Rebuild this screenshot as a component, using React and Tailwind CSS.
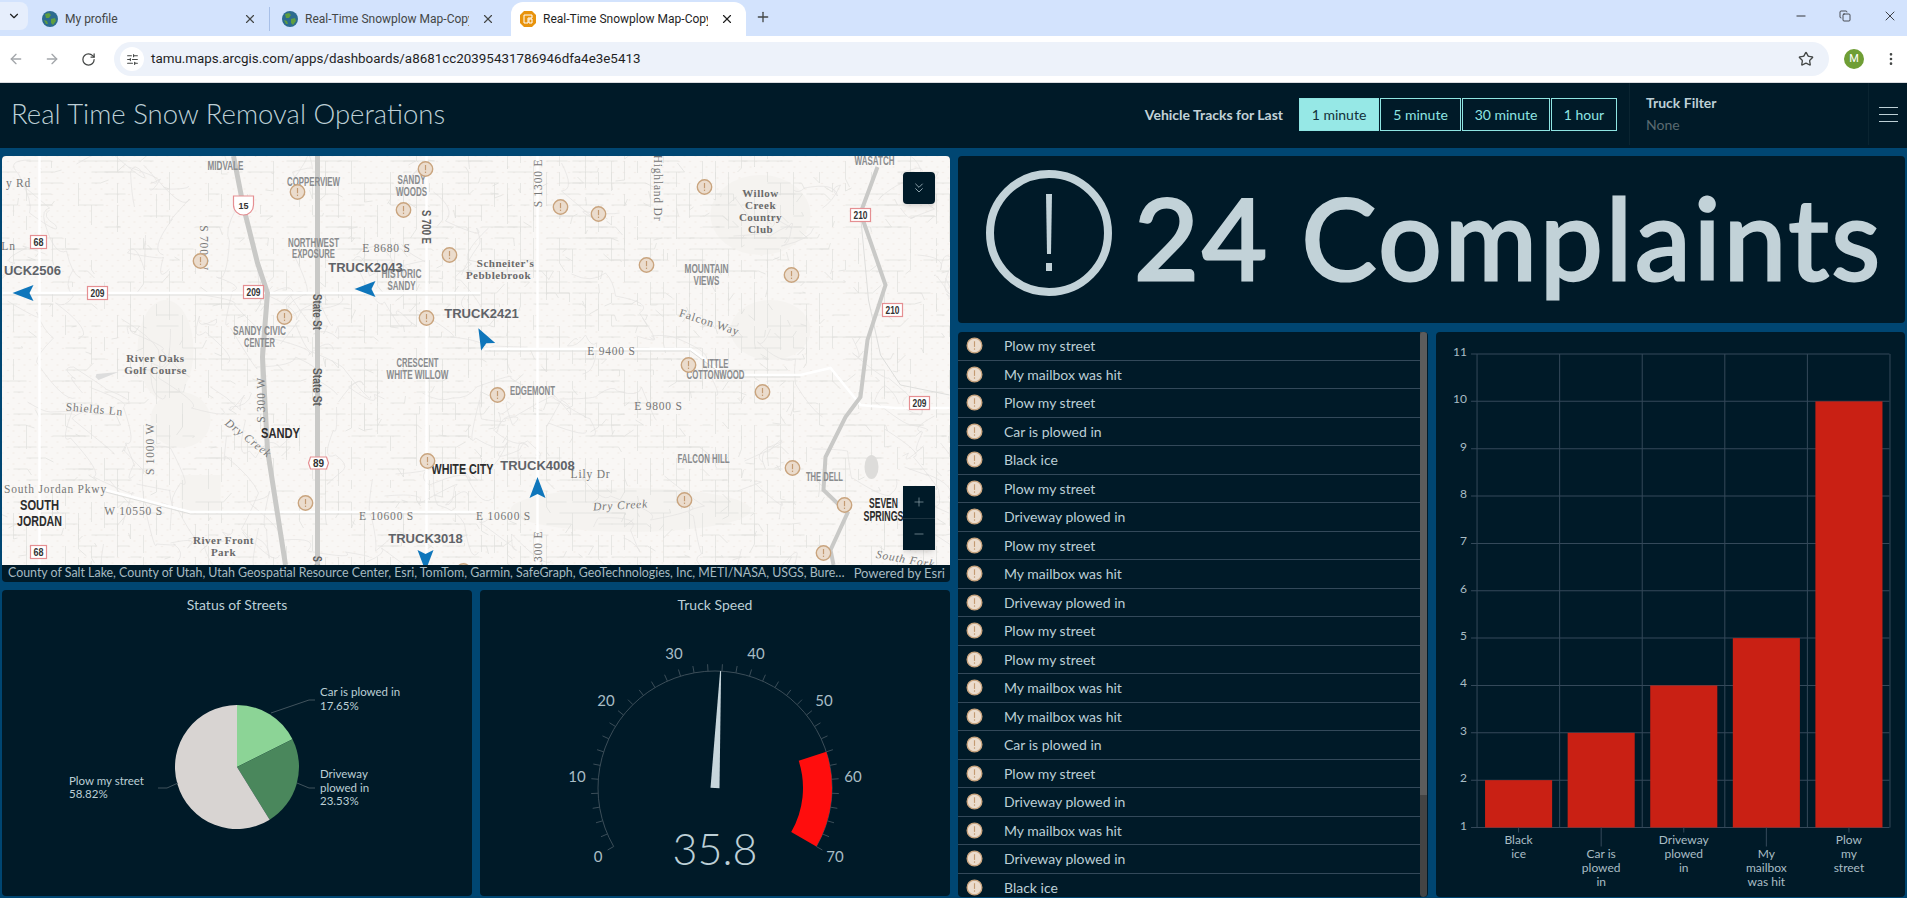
import { ChevronDown, X, Plus, ArrowLeft, ArrowRight, RotateCw, SlidersHorizontal, Star, EllipsisVertical, Minus, Copy, ChevronsDown } from 'lucide-react';

const UI_FONT = "font-['Lato','Noto_Sans',sans-serif]";

// seeded random so the street pattern stays the same between renders
const makeRandom = (seed) => () => {
  seed = (seed * 16807) % 2147483647;
  return (seed - 1) / 2147483646;
};

const buildStreets = () => {
  const rand = makeRandom(4217);
  let d = '';
  for (let x = 0; x < 950; x += 13) {
    for (let y = 150; y < 570; y += 11) {
      const r = rand();
      const dense = x > 340 && x < 800 ? 0.7 : 0.42;
      if (r > dense) continue;
      const len = 8 + rand() * 20;
      if (rand() > 0.5) d += `M${x} ${y}h${len.toFixed(0)}`;
      else d += `M${x} ${y}v${len.toFixed(0)}`;
      if (rand() > 0.6) d += `l${(rand() * 18 - 9).toFixed(0)} ${(rand() * 18 - 9).toFixed(0)}`;
    }
  }
  return d;
};

const buildContours = () => {
  const rand = makeRandom(991);
  let d = '';
  for (let i = 0; i < 90; i++) {
    let x = rand() * 950;
    let y = 156 + rand() * 410;
    d += `M${x.toFixed(0)} ${y.toFixed(0)}`;
    for (let k = 0; k < 4; k++) {
      x += rand() * 60 - 20;
      y += rand() * 60 - 20;
      const cx = x + rand() * 30 - 15;
      const cy = y + rand() * 30 - 15;
      d += `Q${cx.toFixed(0)} ${cy.toFixed(0)} ${x.toFixed(0)} ${y.toFixed(0)}`;
    }
  }
  return d;
};

const STREETS = buildStreets();
const CONTOURS = buildContours();

const MARKERS = [
  [425, 169], [297, 192], [403, 210], [200, 261], [449, 255], [284, 317], [426, 318], [427, 461], [305, 503],
  [704, 187], [560, 207], [598, 214], [646, 265], [791, 275], [497, 395], [688, 365], [762, 392], [792, 468],
  [684, 500], [844, 505], [823, 553], [463, 571],
];

const NEIGHBOURHOODS = [
  ['MIDVALE', 225, 166, 36], ['COPPERVIEW', 313, 182, 53], ['SANDY', 411, 180, 28], ['WOODS', 411, 192, 31],
  ['NORTHWEST', 313, 243, 51], ['EXPOSURE', 313, 254, 43], ['HISTORIC', 401, 274, 40], ['SANDY', 401, 286, 28],
  ['SANDY CIVIC', 259, 331, 53], ['CENTER', 259, 343, 31], ['CRESCENT', 417, 363, 42], ['WHITE WILLOW', 417, 375, 62],
  ['EDGEMONT', 532, 391, 45], ['MOUNTAIN', 706, 269, 44], ['VIEWS', 706, 281, 26], ['LITTLE', 715, 364, 26],
  ['COTTONWOOD', 715, 375, 58], ['FALCON HILL', 703, 459, 52], ['THE DELL', 824, 477, 37], ['WASATCH', 874, 161, 40],
];

const CITIES = [
  ['SANDY', 280, 433, 39], ['SOUTH', 39, 505, 39], ['JORDAN', 39, 521, 45], ['WHITE CITY', 462, 469, 62],
  ['SEVEN', 883, 503, 29], ['SPRINGS', 883, 516, 40],
];

const STREET_NAMES = [
  ['y Rd', 18, 183, 0], ['Ln', 8, 246, 0], ['S 700 W', 203, 248, 90], ['E 8680 S', 386, 248, 0], ['Shields Ln', 94, 409, 5],
  ['S 1000 W', 149, 449, -90], ['S 300 W', 260, 400, -90], ['South Jordan Pkwy', 55, 489, 0], ['W 10550 S', 133, 511, 0],
  ['E 10600 S', 386, 516, 0], ['E 10600 S', 503, 516, 0], ['S 1300 E', 537, 183, -90], ['Highland Dr', 657, 188, 90],
  ['S 1300 E', 537, 555, -90], ['E 9400 S', 611, 351, 0], ['E 9800 S', 658, 406, 0], ['Falcon Way', 709, 322, 18], ['Lily Dr', 590, 474, 0],
];

const WATER_NAMES = [
  ['Dry Creek', 248, 438, 38], ['Dry Creek', 620, 505, -3], ['South Fork', 905, 559, 10],
];

const PARKS = [
  ['River Oaks', 155, 358], ['Golf Course', 155, 370], ["Schneiter's", 505, 263], ['Pebblebrook', 498, 275],
  ['Willow', 760, 193], ['Creek', 760, 205], ['Country', 760, 217], ['Club', 760, 229], ['River Front', 223, 540], ['Park', 223, 552],
];

const ROAD_NAMES = [
  ['S 700 E', 425, 227, 90, 34], ['State St', 316, 312, 90, 36], ['State St', 316, 387, 90, 38], ['S S', 316, 563, 90, 14],
];

const SHIELDS = [
  ['68', 38, 242, 16], ['209', 97, 293, 20], ['209', 253, 292, 20], ['68', 38, 552, 16],
  ['210', 860, 215, 20], ['210', 892, 310, 20], ['209', 919, 403, 20],
];

const TRUCK_LABELS = [
  ['UCK2506', 32, 270], ['TRUCK2043', 365, 267], ['TRUCK2421', 481, 313], ['TRUCK4008', 537, 465], ['TRUCK3018', 425, 538],
];

const TRUCKS = [
  [23, 293, -90], [365, 289, -90], [483, 338, -28], [537, 488, 0], [425, 560, 180],
];

const TruckArrow = ({ x, y, angle }) => (
  <path
    transform={`translate(${x} ${y}) rotate(${angle})`}
    d="M0 -11 L8 10 L0 6 L-8 10 Z"
    fill="#0f76bb"
  />
);

const CityMap = () => (
  <svg viewBox="2 156 947 409" className="block w-full h-[409px] bg-[#f9f7f5]">
    <defs>
      <pattern id="dots" width="11" height="11" patternUnits="userSpaceOnUse">
        <circle cx="2" cy="2" r="0.8" fill="#eee8e3" />
        <circle cx="7.5" cy="7.5" r="0.8" fill="#eee8e3" />
      </pattern>
    </defs>
    <rect x="2" y="156" width="947" height="409" fill="url(#dots)" />
    <g fill="#f5f3f0">
      <ellipse cx="165" cy="350" rx="28" ry="50" />
      <ellipse cx="180" cy="420" rx="30" ry="28" />
      <rect x="180" y="475" width="40" height="38" />
      <ellipse cx="760" cy="215" rx="50" ry="40" />
      <ellipse cx="630" cy="510" rx="120" ry="22" />
      <ellipse cx="770" cy="330" rx="40" ry="30" />
    </g>
    <path d={STREETS} fill="none" stroke="#dfdfdd" strokeWidth="0.7" />
    <path d={CONTOURS} fill="none" stroke="#e4e3e1" strokeWidth="0.7" />
    <g fill="none" stroke="#ffffff" strokeWidth="2.5">
      <path d="M2 293H480" />
      <path d="M39 156V565" />
      <path d="M426 156V565" />
      <path d="M537 156V565" />
      <path d="M484 349H690L725 375H800L830 368L860 405L895 408H949" />
      <path d="M105 490L190 512H480" />
    </g>
    <g fill="none" stroke="#dededc" strokeWidth="1">
      <path d="M2 295H480M484 351H690L725 377H800M105 492L190 514H480" />
      <path d="M860 215L868 300L880 355L900 385L949 395" />
    </g>
    <g fill="none" stroke="#c9c9c7" strokeWidth="5">
      <path d="M233 156L243 207L257 263L267 293L262 357L267 450L285 565" />
      <path d="M317 156V565" />
      <path d="M877 167L860 213L885 285L867 340L860 397L845 417L825 457L823 490L847 513L830 550L833 565" strokeWidth="4" />
    </g>
    <path d="M96 374l22 -2l-20 8l-3 -3z" fill="#ddd" />
    <ellipse cx="871" cy="467" rx="7" ry="12" fill="#dddcda" />

    <g fontFamily="'Liberation Sans',sans-serif" fontWeight="700" fill="#8a8c8e" fontSize="12" textAnchor="middle">
      {NEIGHBOURHOODS.map(([t, x, y, w], i) => (
        <text key={i} x={x} y={y + 4} textLength={w} lengthAdjust="spacingAndGlyphs">{t}</text>
      ))}
    </g>
    <g fontFamily="'Liberation Sans',sans-serif" fontWeight="700" fill="#2d2d2d" fontSize="15" textAnchor="middle">
      {CITIES.map(([t, x, y, w], i) => (
        <text key={i} x={x} y={y + 5} textLength={w} lengthAdjust="spacingAndGlyphs">{t}</text>
      ))}
    </g>
    <g fontFamily="'Liberation Serif',serif" fill="#777" fontSize="11.5" letterSpacing="0.8" textAnchor="middle">
      {STREET_NAMES.map(([t, x, y, r], i) => (
        <text key={i} x={x} y={y + 4} transform={`rotate(${r} ${x} ${y})`}>{t}</text>
      ))}
    </g>
    <g fontFamily="'Liberation Serif',serif" fontStyle="italic" fill="#777" fontSize="11.5" letterSpacing="0.8" textAnchor="middle">
      {WATER_NAMES.map(([t, x, y, r], i) => (
        <text key={i} x={x} y={y + 4} transform={`rotate(${r} ${x} ${y})`}>{t}</text>
      ))}
    </g>
    <g fontFamily="'Liberation Serif',serif" fontWeight="700" fill="#6a6a6a" fontSize="11" letterSpacing="0.5" textAnchor="middle">
      {PARKS.map(([t, x, y], i) => (
        <text key={i} x={x} y={y + 4}>{t}</text>
      ))}
    </g>
    <g fontFamily="'Liberation Sans',sans-serif" fontWeight="700" fill="#5e5e5e" fontSize="12" textAnchor="middle">
      {ROAD_NAMES.map(([t, x, y, r, w], i) => (
        <text key={i} x={x} y={y + 4} transform={`rotate(${r} ${x} ${y})`} textLength={w} lengthAdjust="spacingAndGlyphs">{t}</text>
      ))}
    </g>

    {SHIELDS.map(([t, x, y, w], i) => (
      <g key={i}>
        <rect x={x - w / 2} y={y - 6.5} width={w} height="13" fill="#fff" stroke="#e58f92" strokeWidth="1.2" />
        <text x={x} y={y + 3.5} textAnchor="middle" fontSize="10" fontWeight="700" fill="#333" fontFamily="'Liberation Sans',sans-serif" textLength={w - 6} lengthAdjust="spacingAndGlyphs">{t}</text>
      </g>
    ))}
    <g>
      <path d="M233 196h20v9a10 10 0 0 1 -20 0z" fill="#fff" stroke="#e58f92" strokeWidth="1.2" />
      <text x="243" y="209" textAnchor="middle" fontSize="9" fontWeight="700" fill="#333" fontFamily="'Liberation Sans',sans-serif">15</text>
      <path d="M310 457h16l2 6l-2 6h-16l-2 -6z" fill="#fff" stroke="#e58f92" strokeWidth="1.2" />
      <text x="318" y="467" textAnchor="middle" fontSize="10" fontWeight="700" fill="#333" fontFamily="'Liberation Sans',sans-serif">89</text>
    </g>

    {MARKERS.map(([x, y], i) => (
      <g key={i}>
        <circle cx={x} cy={y} r="7.2" fill="#ebdccd" stroke="#c9a47e" strokeWidth="1.4" />
        <rect x={x - 0.6} y={y - 4} width="1.2" height="5.2" fill="#c49b72" />
        <rect x={x - 0.6} y={y + 2.6} width="1.2" height="1.4" fill="#c49b72" />
      </g>
    ))}

    <g fontFamily="'Liberation Sans',sans-serif" fontWeight="700" fill="#5f6368" fontSize="13" textAnchor="middle">
      {TRUCK_LABELS.map(([t, x, y], i) => (
        <text key={i} x={x} y={y + 5}>{t}</text>
      ))}
    </g>
    {TRUCKS.map(([x, y, a], i) => <TruckArrow key={i} x={x} y={y} angle={a} />)}
  </svg>
);

const MapCard = () => (
  <div className="relative h-[426px] rounded overflow-hidden bg-[#001a28]">
    <CityMap />
    <div className="absolute right-[15px] top-[16px] w-8 h-8 rounded-sm bg-[#001a28] shadow-md flex items-center justify-center">
      <ChevronsDown size={16} strokeWidth={1.25} className="text-[#a9bdc5]" />
    </div>
    <div className="absolute right-[15px] top-[330px] w-8 h-16 bg-[#001a28] flex flex-col shadow-md">
      <div className="flex-1 flex items-center justify-center border-b border-[#1d3340]">
        <Plus size={14} strokeWidth={1} className="text-[#a9bdc5]" />
      </div>
      <div className="flex-1 flex items-center justify-center">
        <Minus size={14} strokeWidth={1} className="text-[#a9bdc5]" />
      </div>
    </div>
    <div className={`flex h-[17px] items-center justify-between pl-[6px] pr-[5px] leading-none whitespace-nowrap text-[#a6bac2] ${UI_FONT}`}>
      <span className="text-[12.4px]">County of Salt Lake, County of Utah, Utah Geospatial Resource Center, Esri, TomTom, Garmin, SafeGraph, GeoTechnologies, Inc, METI/NASA, USGS, Bure…</span>
      <span className="text-[13px]">Powered by Esri</span>
    </div>
  </div>
);

const polar = (cx, cy, r, deg) => {
  const a = (deg * Math.PI) / 180;
  return [cx + r * Math.sin(a), cy - r * Math.cos(a)];
};

const slice = (cx, cy, r, from, to) => {
  const [x1, y1] = polar(cx, cy, r, from);
  const [x2, y2] = polar(cx, cy, r, to);
  const large = to - from > 180 ? 1 : 0;
  return `M${cx} ${cy}L${x1} ${y1}A${r} ${r} 0 ${large} 1 ${x2} ${y2}Z`;
};

const PieCard = () => (
  <div className={`h-full rounded bg-[#001a28] flex flex-col ${UI_FONT}`}>
    <h3 className="pt-[6px] pb-[6px] text-center text-[14px] leading-[18px] text-[#bccfd6]">Status of Streets</h3>
    <svg viewBox="2 620 470 276" className="w-full h-[276px]">
      <path d={slice(237, 767, 62, 0, 63.5)} fill="#8cd496" />
      <path d={slice(237, 767, 62, 63.5, 148.2)} fill="#4a875c" />
      <path d={slice(237, 767, 62, 148.2, 360)} fill="#d8d4d2" />
      <g fill="none" stroke="#41535d" strokeWidth="1">
        <path d="M271 713L309 700H315" />
        <path d="M297 783L309 788H315" />
        <path d="M178 783L167 788H158" />
      </g>
      <g fontSize="11.5" fill="#bccfd6">
        <text x="320" y="696">Car is plowed in</text>
        <text x="320" y="710">17.65%</text>
        <text x="320" y="778">Driveway</text>
        <text x="320" y="792">plowed in</text>
        <text x="320" y="805">23.53%</text>
        <text x="69" y="785">Plow my street</text>
        <text x="69" y="798">58.82%</text>
      </g>
    </svg>
  </div>
);

const GAUGE_LABELS = [
  ['0', 598, 856], ['10', 577, 776], ['20', 606, 700], ['30', 674, 653],
  ['40', 756, 653], ['50', 824, 700], ['60', 853, 776], ['70', 835, 856],
];

const gaugeAngle = (v) => -120 + (v / 70) * 240;

const GaugeCard = () => {
  const cx = 715;
  const cy = 788;
  const r = 117;
  const [ax, ay] = polar(cx, cy, r, -120);
  const [bx, by] = polar(cx, cy, r, 120);
  const [o1x, o1y] = polar(cx, cy, r, gaugeAngle(56));
  const [o2x, o2y] = polar(cx, cy, r, 120);
  const [i1x, i1y] = polar(cx, cy, 88, 120);
  const [i2x, i2y] = polar(cx, cy, 88, gaugeAngle(56));
  const needle = gaugeAngle(35.8);
  const ticks = Array.from({ length: 36 }, (_, i) => i * 2);

  return (
    <div className={`h-full rounded bg-[#001a28] flex flex-col ${UI_FONT}`}>
      <h3 className="pt-[6px] pb-[6px] text-center text-[14px] leading-[18px] text-[#bccfd6]">Truck Speed</h3>
      <svg viewBox="480 620 470 276" className="w-full h-[276px]">
        <path d={`M${ax} ${ay}A${r} ${r} 0 1 1 ${bx} ${by}`} fill="none" stroke="#3b4d58" strokeWidth="1" />
        {ticks.map((v) => {
          const deg = gaugeAngle(v);
          const [x1, y1] = polar(cx, cy, r, deg);
          const [x2, y2] = polar(cx, cy, r + 7, deg);
          return <line key={v} x1={x1} y1={y1} x2={x2} y2={y2} stroke="#3b4d58" strokeWidth="1" />;
        })}
        <path d={`M${o1x} ${o1y}A${r} ${r} 0 0 1 ${o2x} ${o2y}L${i1x} ${i1y}A88 88 0 0 0 ${i2x} ${i2y}Z`} fill="#ff0d0d" />
        <path
          transform={`rotate(${needle} ${cx} ${cy})`}
          d={`M${cx - 4.5} ${cy}L${cx - 0.5} ${cy - r}H${cx + 0.5}L${cx + 4.5} ${cy}Z`}
          fill="#c7d6dc"
        />
        <g fontSize="15" fill="#a9bdc5" textAnchor="middle">
          {GAUGE_LABELS.map(([t, x, y]) => (
            <text key={t} x={x} y={y + 6}>{t}</text>
          ))}
        </g>
        <text x={cx} y="865" fontSize="43" fontWeight="300" fill="#bccfd6" textAnchor="middle">35.8</text>
      </svg>
    </div>
  );
};

const ComplaintsCard = () => (
  <div className={`h-[167px] rounded bg-[#001a28] flex items-center pl-[28px] text-[#c2d2d8] ${UI_FONT}`}>
    <svg viewBox="0 0 126 126" className="w-[126px] h-[126px] shrink-0 mt-[-14px]">
      <circle cx="63" cy="63" r="59" fill="none" stroke="#c2d2d8" strokeWidth="8" />
      <path d="M60 24H66L65 84H61Z" fill="#c2d2d8" />
      <rect x="60" y="93" width="6" height="8" fill="#c2d2d8" />
    </svg>
    <span className="ml-[22px] text-[112px] leading-none whitespace-nowrap mt-[-6px] tracking-[3px] [-webkit-text-stroke:3px_#c2d2d8]">24 Complaints</span>
  </div>
);

const COMPLAINTS = [
  'Plow my street', 'My mailbox was hit', 'Plow my street', 'Car is plowed in', 'Black ice',
  'Plow my street', 'Driveway plowed in', 'Plow my street', 'My mailbox was hit', 'Driveway plowed in',
  'Plow my street', 'Plow my street', 'My mailbox was hit', 'My mailbox was hit', 'Car is plowed in',
  'Plow my street', 'Driveway plowed in', 'My mailbox was hit', 'Driveway plowed in', 'Black ice',
];

const RowIcon = () => (
  <svg viewBox="0 0 18 18" className="w-[17px] h-[17px] shrink-0">
    <circle cx="9" cy="9" r="7.8" fill="#ebdccd" stroke="#c9a47e" strokeWidth="1.4" />
    <rect x="8.4" y="4.5" width="1.2" height="6" fill="#c49b72" />
    <rect x="8.4" y="12" width="1.2" height="1.5" fill="#c49b72" />
  </svg>
);

const ComplaintList = () => (
  <div className={`relative h-full rounded bg-[#001a28] overflow-hidden ${UI_FONT}`}>
    {COMPLAINTS.map((text, i) => (
      <div key={i} className="h-[28.5px] flex items-center pl-[8px] border-b border-[#33495a] mr-[8px] text-[14px] text-[#bccfd6]">
        <RowIcon />
        <span className="ml-[21px]">{text}</span>
      </div>
    ))}
    <div className="absolute right-[1px] top-0 bottom-0 w-[7px] bg-[#444] rounded-b">
      <div className="h-[463px] bg-[#5c5c5c] rounded-t" />
    </div>
  </div>
);

const BAR_DATA = [
  { value: 2, lines: ['Black', 'ice'], offset: 0 },
  { value: 3, lines: ['Car is', 'plowed', 'in'], offset: 1 },
  { value: 4, lines: ['Driveway', 'plowed', 'in'], offset: 0 },
  { value: 5, lines: ['My', 'mailbox', 'was hit'], offset: 1 },
  { value: 10, lines: ['Plow', 'my', 'street'], offset: 0 },
];

const BarChart = () => {
  const yOf = (v) => 827 - (v - 1) * 47.3;
  const xOf = (i) => 1477 + i * 82.5;
  const values = [1, 2, 3, 4, 5, 6, 7, 8, 9, 10, 11];

  return (
    <div className={`h-full rounded bg-[#001a28] ${UI_FONT}`}>
      <svg viewBox="1436 332 469 564" className="w-full h-full block">
        {values.map((v) => (
          <g key={v}>
            <line x1="1471" x2="1889" y1={yOf(v)} y2={yOf(v)} stroke="#34495a" strokeWidth="1" />
            <text x="1467" y={yOf(v) + 2} textAnchor="end" fontSize="12" fill="#a9bdc5">{v}</text>
          </g>
        ))}
        {[0, 1, 2, 3, 4, 5].map((i) => (
          <line key={i} x1={xOf(i)} x2={xOf(i)} y1="354" y2="827" stroke="#34495a" strokeWidth="1" />
        ))}
        {BAR_DATA.map((bar, i) => {
          const cx = 1518.5 + i * 82.5;
          return (
            <g key={i}>
              <rect x={cx - 33.5} y={yOf(bar.value)} width="67" height={827 - yOf(bar.value)} fill="#c92014" />
              <line x1={cx} x2={cx} y1="827" y2={bar.offset ? 846 : 832} stroke="#34495a" strokeWidth="1" />
              {bar.lines.map((line, k) => (
                <text key={k} x={cx} y={843 + (k + bar.offset) * 14} textAnchor="middle" fontSize="12" fill="#a9bdc5">{line}</text>
              ))}
            </g>
          );
        })}
      </svg>
    </div>
  );
};

const Globe = () => (
  <svg viewBox="0 0 16 16" className="w-4 h-4 shrink-0">
    <circle cx="8" cy="8" r="8" fill="#2c6b8f" />
    <path d="M3 3l4 -1l2 2l-2 3l-3 0zM9 8l4 -1l1 3l-3 4l-2 -2zM2 9l3 1l1 3l-2 0z" fill="#5f9e3f" />
  </svg>
);

const DashFavicon = () => (
  <svg viewBox="0 0 16 16" className="w-4 h-4 shrink-0">
    <path d="M4 0h8l4 4v8l-4 4H4l-4 -4V4z" fill="#e8930c" />
    <path d="M4 4h8v3H8v5H4zM9 8h3v4H9z" fill="none" stroke="#fff" strokeWidth="1" />
  </svg>
);

const Tab = ({ title, icon, active, width }) => (
  <div className={`relative flex items-center h-[34px] pr-[12px] mt-[2px] ${width} ${active ? 'bg-white rounded-t-xl text-[#1f1f1f]' : 'text-[#444746]'}`}>
    {icon}
    <span className="ml-[7px] flex-1 text-[12px] overflow-hidden whitespace-nowrap">{title}</span>
    <X size={14} className="ml-[12px] shrink-0" />
  </div>
);

const BrowserChrome = () => (
  <div className="font-['Roboto',sans-serif]">
    <div className="h-[36px] bg-[#d3e3fd] flex items-start">
      <div className="w-[28px] h-[28px] mt-[2px] rounded-r-lg bg-[#e6eefc] flex items-center justify-center">
        <ChevronDown size={14} className="text-[#1f1f1f]" />
      </div>
      <Tab title="My profile" icon={<Globe />} width="w-[235px] ml-[6px] pl-[8px]" />
      <div className="w-px h-[24px] mt-[7px] bg-[#a8c0e8]" />
      <Tab title="Real-Time Snowplow Map-Copy" icon={<Globe />} width="w-[231px] ml-[6px] pl-[6px]" />
      <Tab title="Real-Time Snowplow Map-Copy" icon={<DashFavicon />} active width="w-[235px] ml-[4px] pl-[9px]" />
      <Plus size={16} className="ml-[9px] mt-[9px] text-[#444746]" />
      <div className="ml-auto flex items-center gap-[31px] pr-[9px] mt-[8px] text-[#1f1f1f]">
        <Minus size={14} strokeWidth={1.5} />
        <Copy size={12} strokeWidth={1.5} />
        <X size={16} strokeWidth={1.25} />
      </div>
    </div>
    <div className="h-[47px] bg-white border-b border-[#dadce0] flex items-center pl-[8px] pr-[8px]">
      <ArrowLeft size={16} className="text-[#a3a6aa]" />
      <ArrowRight size={16} className="ml-[20px] text-[#a3a6aa]" />
      <RotateCw size={15} className="ml-[21px] text-[#444746]" />
      <div className="ml-[18px] flex-1 h-[34px] rounded-full bg-[#edf2fa] flex items-center pl-[6px] pr-[15px]">
        <div className="w-[24px] h-[24px] rounded-full bg-white flex items-center justify-center">
          <SlidersHorizontal size={13} className="text-[#444746]" />
        </div>
        <span className="ml-[7px] text-[13.4px] text-[#1f1f1f]">tamu.maps.arcgis.com/apps/dashboards/a8681cc20395431786946dfa4e3e5413</span>
        <Star size={16} className="ml-auto text-[#444746]" />
      </div>
      <div className="ml-[15px] w-[20px] h-[20px] rounded-full bg-[#6f9e35] text-white text-[11px] flex items-center justify-center">M</div>
      <EllipsisVertical size={16} className="ml-[19px] text-[#444746]" />
    </div>
  </div>
);

const RANGE_BUTTONS = [
  { label: '1 minute', width: 'w-[80px]', active: true },
  { label: '5 minute', width: 'w-[81px]' },
  { label: '30 minute', width: 'w-[88px]' },
  { label: '1 hour', width: 'w-[66px]' },
];

const DashHeader = () => (
  <header className={`h-[65px] bg-[#001a28] flex items-center ${UI_FONT}`}>
    <h1 className="ml-[11px] mb-[4px] text-[27.5px] font-light text-[#bccfd6] whitespace-nowrap">Real Time Snow Removal Operations</h1>
    <div className="ml-auto flex items-center h-full pb-[3px]">
      <span className="text-[14px] font-bold text-[#c2d2d8] mr-[16px]">Vehicle Tracks for Last</span>
      <div className="flex gap-px mr-[12px]">
        {RANGE_BUTTONS.map((btn) => (
          <div
            key={btn.label}
            className={`${btn.width} h-[33px] border border-[#8fe5e3] flex items-center justify-center text-[14px] ${btn.active ? 'bg-[#96e8e6] text-[#12303a]' : 'text-[#8fe5e3]'}`}
          >
            {btn.label}
          </div>
        ))}
      </div>
      <div className="w-[240px] h-full border-l border-r border-[#0a2431] pl-[16px] flex flex-col justify-center gap-[2px]">
        <span className="text-[14px] font-bold text-[#bccfd6] leading-[20px]">Truck Filter</span>
        <span className="text-[14px] text-[#5b6a71] leading-[20px]">None</span>
      </div>
      <div className="w-[38px] flex flex-col items-center gap-[6px]">
        <div className="w-[19px] h-px bg-[#bccfd6]" />
        <div className="w-[19px] h-px bg-[#bccfd6]" />
        <div className="w-[19px] h-px bg-[#bccfd6]" />
      </div>
    </div>
  </header>
);

export default function App() {
  return (
    <div className="w-[1907px] h-[898px] overflow-hidden bg-[#004672] flex flex-col">
      <BrowserChrome />
      <DashHeader />
      <main className="flex-1 min-h-0 flex gap-[8px] pt-[8px] pb-[2px] px-[2px]">
        <div className="w-[948px] flex flex-col gap-[8px]">
          <MapCard />
          <div className="flex-1 min-h-0 grid grid-cols-2 gap-[8px]">
            <PieCard />
            <GaugeCard />
          </div>
        </div>
        <div className="flex-1 flex flex-col gap-[9px]">
          <ComplaintsCard />
          <div className="flex-1 min-h-0 grid grid-cols-2 gap-[8px]">
            <ComplaintList />
            <BarChart />
          </div>
        </div>
      </main>
    </div>
  );
}
